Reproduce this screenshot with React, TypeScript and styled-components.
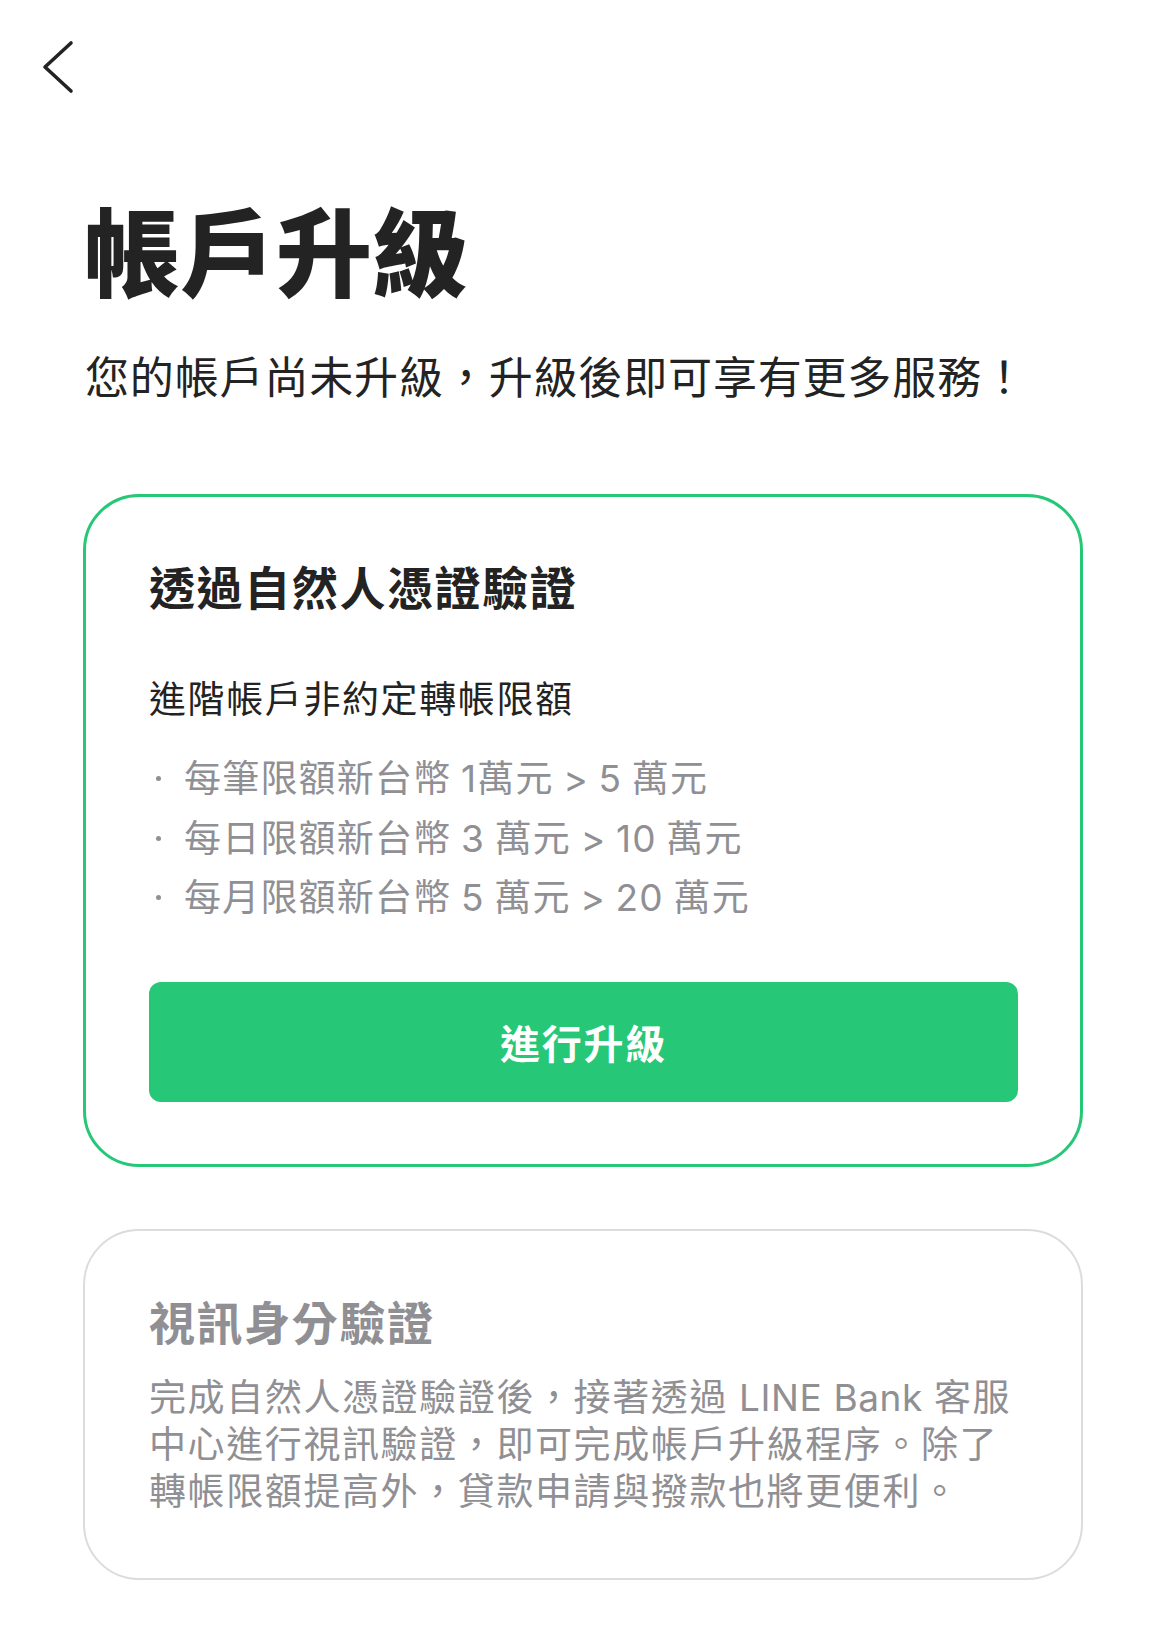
import React from "react";
import styled, { createGlobalStyle } from "styled-components";

const GlobalStyle = createGlobalStyle`
  html, body {
    margin: 0;
    padding: 0;
    background: #ffffff;
  }
  body {
    font-family: "Inter", "Noto Sans CJK TC", "Noto Sans", sans-serif;
    color: #232323;
    -webkit-font-smoothing: antialiased;
  }
  * { box-sizing: border-box; }
`;

const GREEN = "#26c777";
const GRAY = "#8f8f94";

const Page = styled.div`
  width: 1168px;
  min-height: 1626px;
  background: #fff;
`;

const Header = styled.header`
  height: 197px;
  padding: 40px 0 0 42px;
`;

const BackButton = styled.button`
  display: flex;
  align-items: center;
  justify-content: center;
  width: 34px;
  height: 54px;
  padding: 0;
  border: none;
  background: transparent;
  cursor: pointer;
`;

const Main = styled.main`
  padding: 0 85px 0 83px;
`;

const Title = styled.h1`
  margin: 0;
  font-size: 96px;
  line-height: 115px;
  font-weight: 900;
  color: #232323;
  padding-left: 1px;
`;

const Subtitle = styled.p`
  margin: 38px 0 0;
  font-size: 44px;
  line-height: 57px;
  letter-spacing: 0.85px;
  color: #232323;
  padding-left: 2px;
`;

const Card = styled.section<{ $active?: boolean }>`
  margin-top: ${(p) => (p.$active ? "87px" : "62px")};
  border: ${(p) => (p.$active ? `3px solid ${GREEN}` : "2px solid #dcdcdc")};
  border-radius: 56px;
  padding: ${(p) => (p.$active ? "61px 62px 62px 63px" : "62px 63px 63px 64px")};
  display: flex;
  flex-direction: column;
`;

const CardTitle = styled.h2<{ $muted?: boolean }>`
  margin: 0;
  font-size: 46px;
  line-height: 61px;
  letter-spacing: 1.6px;
  font-weight: 700;
  color: ${(p) => (p.$muted ? GRAY : "#232323")};
`;

const CardSubheading = styled.h3`
  margin: 54px 0 0;
  font-size: 37px;
  line-height: 53px;
  letter-spacing: 1.6px;
  font-weight: 400;
  color: #232323;
`;

const LimitList = styled.ul`
  list-style: none;
  margin: 23px 0 0;
  padding: 0;
`;

const LimitItem = styled.li`
  display: flex;
  align-items: center;
  font-size: 37px;
  line-height: 59.5px;
  letter-spacing: 1.2px;
  word-spacing: -2px;
  color: ${GRAY};
  white-space: pre;
`;

const Dot = styled.span`
  width: 35px;
  flex: none;
  display: flex;
  padding-left: 7px;
  &::before {
    content: "";
    width: 5px;
    height: 5px;
    border-radius: 50%;
    background: ${GRAY};
  }
`;

const PrimaryButton = styled.button`
  margin-top: 54px;
  height: 120px;
  width: 100%;
  border: none;
  border-radius: 12px;
  background: ${GREEN};
  color: #ffffff;
  font-family: inherit;
  font-size: 40px;
  font-weight: 700;
  letter-spacing: 1.8px;
  cursor: pointer;
`;

const Description = styled.p`
  margin: 20px 0 0;
  font-size: 37px;
  line-height: 47px;
  letter-spacing: 1.6px;
  color: ${GRAY};
  white-space: nowrap;
`;

const Latin = styled.span`
  letter-spacing: 0.6px;
`;

const ChevronLeft = () => (
  <svg width="34" height="54" viewBox="0 0 34 54" fill="none">
    <polyline
      points="29,3 3,27 29,51"
      stroke="#232323"
      strokeWidth="3.6"
      strokeLinecap="round"
      strokeLinejoin="round"
    />
  </svg>
);

const limits = [
  "每筆限額新台幣 1萬元 > 5 萬元",
  "每日限額新台幣 3 萬元 > 10 萬元",
  "每月限額新台幣 5 萬元 > 20 萬元",
];

export default function App() {
  return (
    <Page>
      <GlobalStyle />
      <Header>
        <BackButton aria-label="返回">
          <ChevronLeft />
        </BackButton>
      </Header>
      <Main>
        <Title>帳戶升級</Title>
        <Subtitle>您的帳戶尚未升級，升級後即可享有更多服務！</Subtitle>

        <Card $active>
          <CardTitle>透過自然人憑證驗證</CardTitle>
          <CardSubheading>進階帳戶非約定轉帳限額</CardSubheading>
          <LimitList>
            {limits.map((l) => (
              <LimitItem key={l}>
                <Dot />
                {l}
              </LimitItem>
            ))}
          </LimitList>
          <PrimaryButton>進行升級</PrimaryButton>
        </Card>

        <Card>
          <CardTitle $muted>視訊身分驗證</CardTitle>
          <Description>
            完成自然人憑證驗證後，接著透過<Latin> LINE Bank </Latin>客服
            <br />
            中心進行視訊驗證，即可完成帳戶升級程序。除了
            <br />
            轉帳限額提高外，貸款申請與撥款也將更便利。
          </Description>
        </Card>
      </Main>
    </Page>
  );
}
